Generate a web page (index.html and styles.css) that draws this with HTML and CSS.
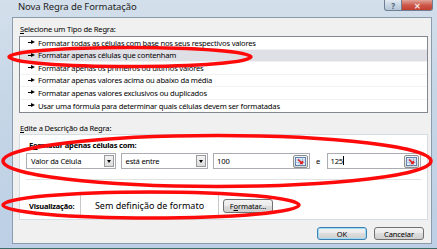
FILE: index.html
```html
<!DOCTYPE html>
<html lang="pt">
<head>
  <meta charset="UTF-8">
  <title>Nova Regra de Formatação</title>
  <link rel="stylesheet" href="styles.css">
</head>
<body>
  <div class="window">
    <!-- Title bar -->
    <div class="titlebar">
      <span class="title">Nova Regra de Formatação</span>
      <div class="caption-buttons">
        <span class="cap-btn help">?</span>
        <span class="cap-btn close">✕</span>
      </div>
    </div>

    <div class="client">
      <p class="label"><u>S</u>elecione um Tipo de Regra:</p>
      <ul class="rule-list">
        <li><span class="arrow"></span>Formatar todas as células com base nos seus respectivos valores</li>
        <li class="selected"><span class="arrow"></span>Formatar apenas células que contenham</li>
        <li><span class="arrow"></span>Formatar apenas os primeiros ou últimos valores</li>
        <li><span class="arrow"></span>Formatar apenas valores acima ou abaixo da média</li>
        <li><span class="arrow"></span>Formatar apenas valores exclusivos ou duplicados</li>
        <li><span class="arrow"></span>Usar uma fórmula para determinar quais células devem ser formatadas</li>
      </ul>

      <p class="label label-desc"><u>E</u>dite a Descrição da Regra:</p>
      <div class="rule-box">
        <p class="rule-title">F<u>o</u>rmatar apenas células com:</p>
        <div class="criteria">
          <div class="combo combo-field">
            <span class="combo-text">Valor da Célula</span>
            <span class="drop"></span>
          </div>
          <div class="combo combo-op">
            <span class="combo-text">está entre</span>
            <span class="drop"></span>
          </div>
          <div class="ref-edit">
            <span class="ref-text">100</span>
            <span class="ref-btn">
              <svg width="11" height="9" viewBox="0 0 11 9">
                <rect x="0.5" y="0.5" width="10" height="8" fill="#e8f0fa" stroke="#5b7fae"/>
                <path d="M0.5 3H10.5M0.5 5.5H10.5M4 0.5V8.5M7.5 0.5V8.5" stroke="#9fb6d3" stroke-width="0.8"/>
                <path d="M3 2.5L7.5 6.5M7.5 6.5V4M7.5 6.5H5" stroke="#e02020" stroke-width="1.6"/>
              </svg>
            </span>
          </div>
          <span class="and">e</span>
          <div class="ref-edit ref-last">
            <span class="ref-text">125<span class="caret"></span></span>
            <span class="ref-btn">
              <svg width="11" height="9" viewBox="0 0 11 9">
                <rect x="0.5" y="0.5" width="10" height="8" fill="#e8f0fa" stroke="#5b7fae"/>
                <path d="M0.5 3H10.5M0.5 5.5H10.5M4 0.5V8.5M7.5 0.5V8.5" stroke="#9fb6d3" stroke-width="0.8"/>
                <path d="M3 2.5L7.5 6.5M7.5 6.5V4M7.5 6.5H5" stroke="#e02020" stroke-width="1.6"/>
              </svg>
            </span>
          </div>
        </div>

        <div class="preview-row">
          <span class="preview-label">Visualização:</span>
          <div class="preview">Sem definição de formato</div>
          <button class="btn btn-format">F<u>o</u>rmatar...</button>
        </div>
      </div>

      <div class="actions">
        <button class="btn btn-default">OK</button>
        <button class="btn">Cancelar</button>
      </div>
    </div>
  </div>

  <!-- Red marker ellipses drawn over the dialog -->
  <svg class="marks" width="437" height="249" viewBox="0 0 437 249">
    <ellipse cx="130" cy="57" rx="121" ry="9.5" />
    <ellipse cx="217" cy="161" rx="214" ry="25.5" />
    <ellipse cx="151" cy="205" rx="148" ry="13" />
  </svg>
</body>
</html>
```

FILE: styles.css
```css
* {
  margin: 0;
  padding: 0;
  box-sizing: border-box;
}

body {
  width: 437px;
  height: 249px;
  overflow: hidden;
  position: relative;
  font-family: "Noto Sans", "Open Sans", sans-serif;
  font-size: 7.6px;
  letter-spacing: -0.2px;
  color: #000;
  background: #b9cde3;
}

u {
  text-decoration: underline;
  text-underline-offset: 1px;
}

/* Window frame */
.window {
  height: 249px;
  display: flex;
  flex-direction: column;
  padding: 0 5px 4px 12px;
  background: linear-gradient(180deg, #d3dfeb 0%, #c6d6e7 40%, #bccfe4 100%);
  border-bottom: 1px solid #3d6b66;
}

.titlebar {
  height: 17px;
  flex-shrink: 0;
  display: flex;
  justify-content: space-between;
  align-items: flex-start;
}

.title {
  font-size: 9.5px;
  letter-spacing: -0.1px;
  line-height: 14px;
  padding-left: 6px;
  color: #1e1e1e;
}

.caption-buttons {
  display: flex;
  margin-right: -1px;
}

.cap-btn {
  height: 11px;
  display: flex;
  align-items: center;
  justify-content: center;
  font-size: 8px;
  font-weight: 700;
  border: 1px solid #6f7f92;
  border-top: none;
}

.help {
  width: 18px;
  color: #4b5e74;
  background: linear-gradient(180deg, #e3eaf2 0%, #c6d3e1 55%, #b5c6d8 100%);
  border-radius: 0 0 0 3px;
}

.close {
  width: 31px;
  color: #f4e6e6;
  background: linear-gradient(180deg, #e1a69b 0%, #cd5a4c 50%, #c33d2e 100%);
  border-left: none;
  border-radius: 0 0 3px 0;
}

/* Dialog body */
.client {
  flex: 1;
  background: #f0f0f0;
  border: 1px solid #8d9cad;
  padding: 5px 3px 0 6px;
  display: flex;
  flex-direction: column;
}

.label {
  line-height: 12px;
  padding-left: 1px;
  margin-bottom: 1px;
}

.label-desc {
  line-height: 11px;
  margin-bottom: 0;
}

.rule-list {
  list-style: none;
  background: #fff;
  border: 1px solid #828790;
  margin-bottom: 10px;
}

.rule-list li {
  height: 12.5px;
  padding-left: 8px;
  display: flex;
  align-items: center;
  border-bottom: 1px solid #f2f2f2;
  white-space: nowrap;
}

.rule-list li:last-child {
  border-bottom: none;
}

.rule-list li.selected {
  background: #dfdfe6;
}

.arrow {
  width: 7px;
  height: 5px;
  margin-right: 3px;
  display: inline-block;
  position: relative;
}

/* little stem plus triangle */
.arrow::before {
  content: "";
  position: absolute;
  left: 0;
  top: 2px;
  width: 3px;
  height: 1px;
  background: #000;
}

.arrow::after {
  content: "";
  position: absolute;
  left: 3px;
  top: 0;
  border-left: 4px solid #000;
  border-top: 2.5px solid transparent;
  border-bottom: 2.5px solid transparent;
}

.rule-box {
  background: #fff;
  border: 1px solid #d5dde4;
  height: 86px;
  flex-shrink: 0;
  padding: 4px 6px 0 6px;
}

.rule-title {
  font-weight: 700;
  line-height: 12px;
  padding-left: 3px;
}

.criteria {
  display: flex;
  align-items: flex-start;
  margin-top: 2px;
  height: 27px;
  border-bottom: 1px solid #e3e3e3;
}

.combo,
.ref-edit {
  height: 16px;
  display: flex;
  align-items: center;
  justify-content: space-between;
  border: 1px solid #abadb3;
  background: #fff;
  padding: 0 1px 0 4px;
}

.combo-field {
  width: 90px;
  margin-right: 5px;
}

.combo-op {
  width: 88px;
  margin-right: 5px;
}

.ref-edit {
  width: 97px;
  padding-left: 3px;
}

.ref-last {
  width: 95px;
}

.and {
  width: 17px;
  line-height: 16px;
  text-align: center;
}

.drop {
  width: 10px;
  height: 12px;
  border: 1px solid #9a9a9a;
  background: linear-gradient(180deg, #f4f4f4 0%, #dcdcdc 100%);
  position: relative;
}

.drop::after {
  content: "";
  position: absolute;
  left: 2px;
  top: 4px;
  border-top: 3px solid #000;
  border-left: 2.5px solid transparent;
  border-right: 2.5px solid transparent;
}

.ref-btn {
  width: 15px;
  height: 13px;
  display: flex;
  align-items: center;
  justify-content: center;
  border: 1px solid #8e8f8f;
  border-radius: 2px;
  background: linear-gradient(180deg, #f6f6f6 0%, #d9d9d9 100%);
}

.caret {
  display: inline-block;
  width: 1px;
  height: 9px;
  background: #000;
  vertical-align: -1px;
}

.preview-row {
  display: flex;
  align-items: center;
  margin-top: 13px;
  height: 25px;
}

.preview-label {
  font-weight: 700;
  font-size: 7.5px;
  width: 54px;
  padding-left: 3px;
}

.preview {
  width: 139px;
  height: 25px;
  border: 1px solid #c9c9c9;
  display: flex;
  align-items: center;
  justify-content: center;
  font-size: 9px;
  letter-spacing: 0;
}

.btn {
  font-family: inherit;
  font-size: 7.5px;
  letter-spacing: -0.1px;
  height: 14px;
  border: 1px solid #707070;
  border-radius: 3px;
  background: linear-gradient(180deg, #f2f2f2 0%, #ebebeb 45%, #dddddd 50%, #cfcfcf 100%);
  color: #000;
}

.btn-format {
  width: 50px;
  margin-left: 4px;
}

.actions {
  display: flex;
  justify-content: flex-end;
  gap: 7px;
  margin-top: 7px;
  padding-right: 4px;
}

.actions .btn {
  width: 50px;
  height: 13px;
}

.btn-default {
  border-color: #3c7fb1;
  box-shadow: inset 0 0 0 1px #9fdcf4;
}

/* Annotation overlay */
.marks {
  position: absolute;
  top: 0;
  left: 0;
  pointer-events: none;
}

.marks ellipse {
  fill: none;
  stroke: #ff0a0a;
  stroke-width: 3.5;
}
```
